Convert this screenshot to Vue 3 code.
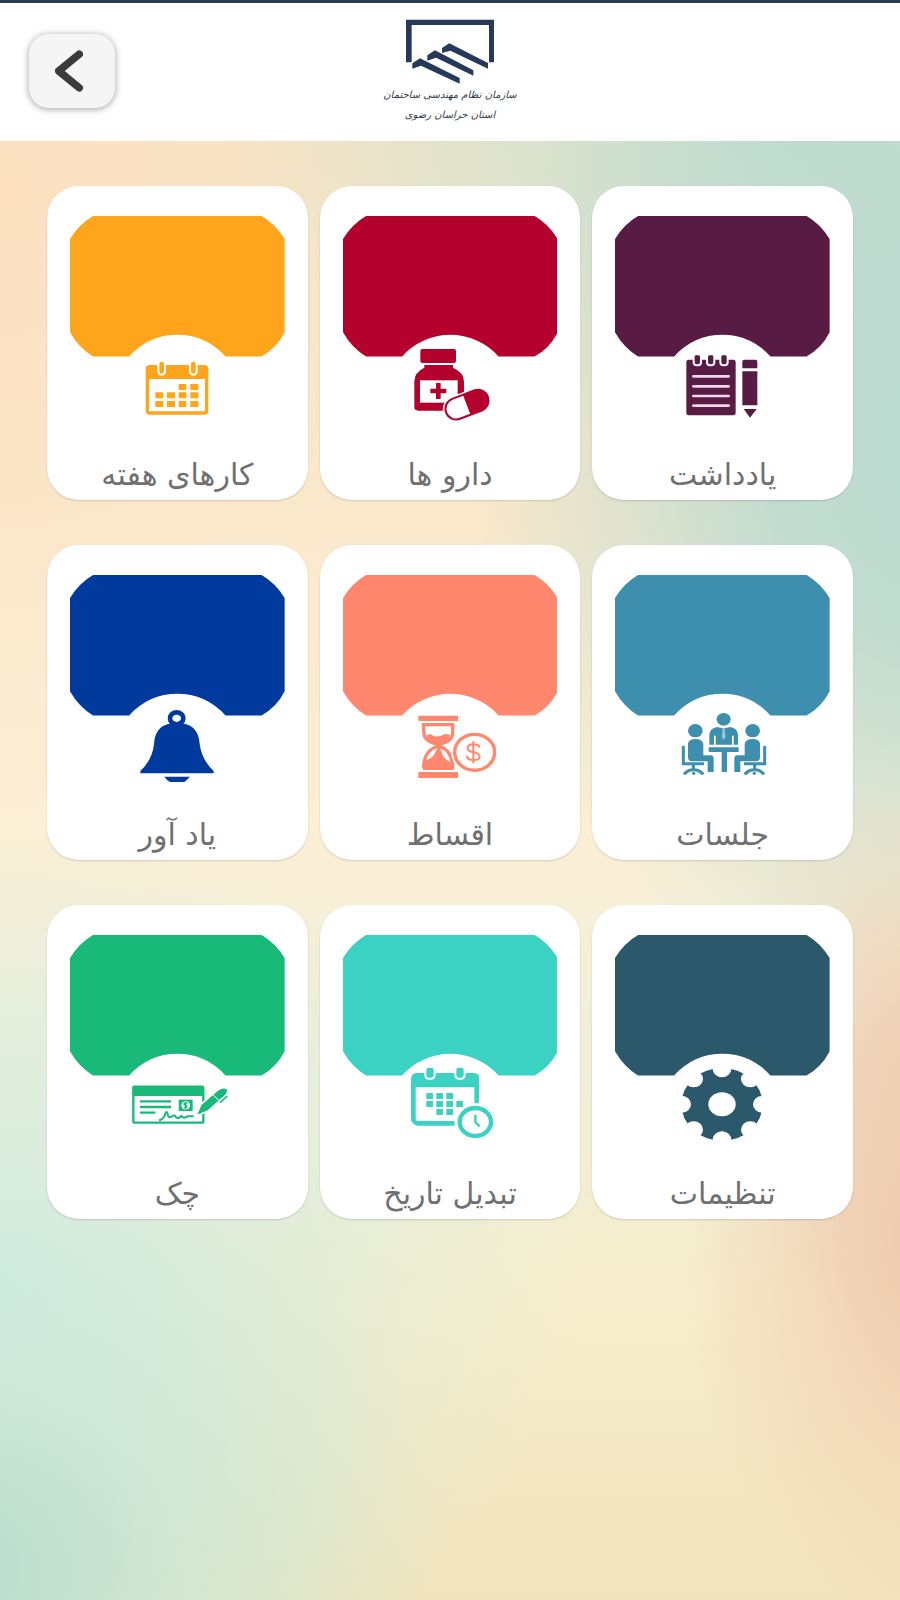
<script setup>
import { ref } from 'vue'

const selected = ref('')

const items = [
  { id: 'note', title: 'یادداشت', color: '#581b43' },
  { id: 'medicine', title: 'دارو ها', color: '#b3002d' },
  { id: 'week', title: 'کارهای هفته', color: '#ffa51c' },
  { id: 'meeting', title: 'جلسات', color: '#3e8fae' },
  { id: 'installment', title: 'اقساط', color: '#ff876d' },
  { id: 'reminder', title: 'یاد آور', color: '#003a9d' },
  { id: 'settings', title: 'تنظیمات', color: '#2c586b' },
  { id: 'convert', title: 'تبدیل تاریخ', color: '#3bd1c3' },
  { id: 'cheque', title: 'چک', color: '#18b979' },
]

const select = (item) => {
  selected.value = item.id
}

const goBack = () => {
  window.history.back()
}
</script>

<template>
  <div class="page">
    <svg class="sprite" aria-hidden="true">
      <symbol id="note" viewBox="9 15 360 270">
        <rect x="79" y="59" width="148" height="167" rx="7" fill="currentColor" />
        <g fill="currentColor" stroke="#fff" stroke-width="6">
          <rect x="101" y="41" width="22" height="35" rx="9" />
          <rect x="141" y="41" width="22" height="35" rx="9" />
          <rect x="181" y="41" width="22" height="35" rx="9" />
        </g>
        <path d="M95 36H210V46H95Z" fill="#fff" />
        <path d="M100 109H206M100 139H206M100 168H206M100 197H206" stroke="#f3d9ee" stroke-width="8" stroke-linecap="round" />
        <path d="M247 65Q247 59 253 59H286Q292 59 292 65V85H247ZM247 94H292V196H247ZM251 207H290L270 233Z" fill="currentColor" />
      </symbol>
      <symbol id="medicine" viewBox="0 15 360 270">
        <rect x="91" y="27" width="107" height="42" rx="6" fill="currentColor" />
        <path d="M103 75H189V83Q222 97 222 125V202Q222 212 211 212H85Q73 212 73 202V125Q73 97 103 83Z" fill="currentColor" />
        <rect x="90" y="121" width="113" height="67" fill="#fff" />
        <path d="M145 129V177M121 153H169" stroke="currentColor" stroke-width="14" />
        <g transform="rotate(-21 231 194)">
          <rect x="156" y="155" width="150" height="78" rx="39" fill="#fff" />
          <rect x="164" y="162" width="134" height="64" rx="32" fill="#fff" stroke="currentColor" stroke-width="6" />
          <path d="M230 161H266A33 33 0 0 1 266 227H230Z" fill="currentColor" />
        </g>
      </symbol>
      <symbol id="week" viewBox="-9 -15 360 270">
        <rect x="82" y="50" width="178" height="139" rx="7" fill="#fff" stroke="currentColor" stroke-width="10" />
        <path d="M80 48H262V87H80Z" fill="currentColor" />
        <rect x="115" y="32" width="20" height="42" rx="10" fill="currentColor" stroke="#fff" stroke-width="6" />
        <rect x="210" y="32" width="20" height="42" rx="10" fill="currentColor" stroke="#fff" stroke-width="6" />
        <path d="M176 111H199M211 111H235M106 136H130M141 136H165M176 136H199M211 136H235M106 162H130M141 162H165M176 162H199M211 162H235" stroke="currentColor" stroke-width="18" />
      </symbol>
      <symbol id="meeting" viewBox="9 42 360 270">
        <g fill="currentColor">
          <ellipse cx="191" cy="85" rx="21" ry="19" />
          <path d="M148 161V131Q150 112 171 108Q191 114 211 108Q232 112 234 131V161H221V134H216V161H167V134H162V161Z" />
          <path d="M186 112H196L194 120L197 138L191 146L185 138L188 120Z" fill="#fff" opacity="0.5" />
          <path d="M146 169H236V183H201V243H185V183H146Z" />
        </g>
        <g id="seat" fill="currentColor">
          <ellipse cx="106" cy="119" rx="22" ry="20" />
          <path d="M84 158Q86 144 106 144Q126 144 130 158V193H152Q161 193 161 204V243H143V211H96Q84 211 84 198Z" />
          <path d="M70 165V218H132M100 218V239M75 247Q86 235 100 236Q115 235 127 247" fill="none" stroke="currentColor" stroke-width="9" />
          <circle cx="75" cy="247" r="5" />
          <circle cx="101" cy="247" r="5" />
          <circle cx="127" cy="247" r="5" />
        </g>
        <use href="#seat" transform="matrix(-1 0 0 1 384 0)" />
      </symbol>
      <symbol id="installment" viewBox="0 42 360 270">
        <path d="M85 74H204V90H85ZM85 243H204V261H85Z" fill="currentColor" />
        <path d="M100 101H188V127Q188 151 146 161Q102 151 102 127ZM146 165Q101 177 101 231M146 165Q188 177 188 231" fill="none" stroke="currentColor" stroke-width="10" />
        <path d="M110 132Q121 127 130 134Q143 140 158 132Q168 126 180 132Q178 147 151 157V177Q185 194 192 237H98Q103 194 141 177V157Q114 149 110 132Z" fill="currentColor" />
        <path d="M109 208Q114 183 138 176Q137 196 109 208ZM154 178Q176 188 181 213Q156 202 154 178Z" fill="#fff" />
        <ellipse cx="254" cy="184" rx="70" ry="63" fill="#fff" />
        <ellipse cx="254" cy="184" rx="60" ry="54" fill="none" stroke="currentColor" stroke-width="10" />
        <path d="M269 170Q267 160 250 160Q233 160 233 171Q233 181 250 184Q269 187 269 197Q269 207 250 207Q231 207 230 194M250 151V217" fill="none" stroke="currentColor" stroke-width="6" />
      </symbol>
      <symbol id="reminder" viewBox="-9 42 360 270">
        <ellipse cx="170" cy="82" rx="20" ry="18" fill="none" stroke="currentColor" stroke-width="14" />
        <path d="M170 96C127 96 105 116 102 158C99 191 85 217 61 240V247H281V240C257 217 243 191 239 158C236 116 214 96 170 96Z" fill="currentColor" />
        <path d="M133 257H210Q203 265 193 273H150Q140 268 133 257Z" fill="currentColor" />
      </symbol>
      <symbol id="settings" viewBox="9 42 360 270">
        <ellipse cx="186" cy="163" rx="122" ry="109" fill="currentColor" />
        <g fill="#fff">
          <ellipse cx="186" cy="163" rx="41" ry="36" />
          <ellipse cx="186" cy="56" rx="28" ry="26" />
          <ellipse cx="186" cy="270" rx="28" ry="26" />
          <ellipse cx="66" cy="163" rx="27" ry="25" />
          <ellipse cx="306" cy="163" rx="27" ry="25" />
          <ellipse cx="101" cy="87" rx="28" ry="25" />
          <ellipse cx="271" cy="87" rx="28" ry="25" />
          <ellipse cx="101" cy="239" rx="28" ry="25" />
          <ellipse cx="271" cy="239" rx="28" ry="25" />
        </g>
      </symbol>
      <symbol id="convert" viewBox="0 42 360 270">
        <rect x="70" y="76" width="190" height="144" rx="14" fill="#fff" stroke="currentColor" stroke-width="14" />
        <path d="M65 82Q65 70 80 70H252Q267 70 267 82V112H65Z" fill="currentColor" />
        <rect x="106" y="50" width="28" height="36" rx="10" fill="currentColor" stroke="#fff" stroke-width="6" />
        <rect x="196" y="50" width="28" height="36" rx="10" fill="currentColor" stroke="#fff" stroke-width="6" />
        <ellipse cx="256" cy="216" rx="63" ry="57" fill="#fff" />
        <path d="M109 138H129M139 138H159M169 138H189M109 162H129M139 162H159M169 162H189M199 162H219M139 186H159M169 186H189" stroke="currentColor" stroke-width="18" />
        <ellipse cx="256" cy="216" rx="47" ry="42" fill="none" stroke="currentColor" stroke-width="13" />
        <path d="M256 195V216L269 229" fill="none" stroke="currentColor" stroke-width="7" />
      </symbol>
      <symbol id="cheque" viewBox="-9 12 360 270">
        <rect x="40" y="80" width="210" height="108" rx="3" fill="#fff" stroke="currentColor" stroke-width="7" />
        <path d="M38 79H252V108H38Z" fill="currentColor" />
        <path d="M60 124H153M60 141H153M60 158H106" stroke="currentColor" stroke-width="7" />
        <path d="M117 181Q131 178 136 161Q140 150 143 162Q145 177 156 169Q165 163 168 172Q175 178 184 168Q191 177 203 169L221 169" fill="none" stroke="currentColor" stroke-width="6" />
        <rect x="176" y="119" width="42" height="34" fill="currentColor" />
        <ellipse cx="197" cy="136" rx="13" ry="12" fill="#fff" />
        <path d="M203 130Q192 126 192 132Q193 136 199 137Q205 143 192 143M197 126V147" fill="none" stroke="currentColor" stroke-width="4" />
        <path d="M228 168L242 134L294 89Q312 78 323 88Q326 96 316 107L264 153Z" fill="currentColor" stroke="#fff" stroke-width="5" />
        <path d="M278 104L298 122" stroke="#fff" stroke-width="3" />
        <path d="M322 108L300 128" stroke="currentColor" stroke-width="5" />
      </symbol>
    </svg>

    <header class="header">
      <button class="back-btn" type="button" aria-label="بازگشت" @click="goBack">
        <svg viewBox="0 0 30 44" aria-hidden="true">
          <path d="M26 4L4 22L26 40" />
        </svg>
      </button>
      <div class="logo">
        <svg viewBox="102 58 270 198" aria-hidden="true">
          <path d="M105 60H369V188H354V76H122V188H105Z" />
          <path d="M124 207V191L147 176L266 235V252L150 198ZM169 183V167L192 152L307 212V228L195 174ZM213 160V145L235 131L351 190V207L238 153Z" />
        </svg>
        <p>سازمان نظام مهندسی ساختمان</p>
        <p>استان خراسان رضوی</p>
      </div>
    </header>

    <main class="menu" dir="rtl">
      <button
        v-for="item in items"
        :key="item.id"
        class="card"
        :class="{ selected: selected === item.id }"
        type="button"
        @click="select(item)"
      >
        <svg class="panel" viewBox="0 0 214 141" :style="{ color: item.color }" aria-hidden="true">
          <path d="M23 0H191Q205 8 214 23V116Q206 132 191 140H155A64 64 0 0 0 59 140H23Q9 132 0 116V23Q9 8 23 0Z" fill="currentColor" />
        </svg>
        <svg class="icon" :style="{ color: item.color }" aria-hidden="true">
          <use :href="'#' + item.id" />
        </svg>
        <span class="title">{{ item.title }}</span>
      </button>
    </main>
  </div>
</template>

<style>
body {
  margin: 0;
}
</style>

<style scoped>
.page {
  min-height: 100vh;
  box-sizing: border-box;
  border-top: 3px solid #2b3d4d;
  font-family: 'DejaVu Sans', 'Noto Sans', sans-serif;
  background:
    radial-gradient(ellipse 28% 24% at 104% 78%, #efc8ab 0%, rgba(240, 201, 172, 0) 100%),
    radial-gradient(ellipse 22% 18% at 102% 66%, rgba(240, 212, 184, 0.9) 0%, rgba(240, 212, 184, 0) 100%),
    radial-gradient(ellipse 52% 36% at 104% 28%, #b9dad1 0%, rgba(185, 218, 209, 0.85) 35%, rgba(185, 218, 209, 0) 100%),
    radial-gradient(ellipse 64% 20% at 90% 8%, #c3ddd0 0%, rgba(195, 221, 208, 0) 100%),
    radial-gradient(ellipse 54% 26% at -4% 98%, #b8ddcf 0%, rgba(196, 229, 216, 0.6) 45%, rgba(212, 236, 225, 0) 100%),
    radial-gradient(ellipse 64% 28% at 0% 80%, #d3ede2 0%, rgba(213, 237, 226, 0) 100%),
    radial-gradient(ellipse 50% 30% at 0% 12%, #fde1c1 0%, rgba(253, 225, 193, 0) 100%),
    linear-gradient(180deg, #f2e6c8 0%, #fae8cb 30%, #fbefd5 52%, #f0efda 66%, #f6edcb 82%, #f2e5bd 100%);
}

.sprite {
  display: block;
  width: 0;
  height: 0;
}

.header {
  display: grid;
  grid-template-columns: 1fr auto 1fr;
  align-items: start;
  box-sizing: border-box;
  min-height: 138px;
  padding: 16px 29px 9px;
  background-color: #fff;
}

.back-btn {
  display: flex;
  align-items: center;
  justify-content: center;
  width: 86px;
  height: 74px;
  margin-top: 15px;
  padding: 0 6px 0 0;
  border: none;
  border-radius: 20px;
  background-color: #f5f5f5;
  box-shadow: 0 1px 6px 1px rgba(0, 0, 0, 0.3);
  cursor: pointer;
}

.back-btn svg {
  width: 28px;
  height: 44px;
}

.back-btn path {
  fill: none;
  stroke: #3b3b3b;
  stroke-width: 8;
  stroke-linecap: round;
  stroke-linejoin: round;
}

.logo {
  display: flex;
  flex-direction: column;
  align-items: center;
}

.logo svg {
  width: 90px;
  height: 66px;
  fill: #26395a;
}

.logo p {
  margin: 0;
  color: #333b46;
  font-size: 10px;
  font-style: italic;
  line-height: 20px;
  direction: rtl;
}

.menu {
  display: grid;
  grid-template-columns: repeat(3, 1fr);
  gap: 45px 12px;
  padding: 45px 47px;
}

.card {
  display: flex;
  flex-direction: column;
  align-items: center;
  min-width: 0;
  padding: 30px 23px 5px;
  border: none;
  border-radius: 32px;
  background-color: #fff;
  box-shadow: 0 1px 2px rgba(0, 0, 0, 0.15);
  font-family: inherit;
  cursor: pointer;
}

.card:active,
.card.selected {
  background-color: #fdfdfd;
}

.panel {
  display: block;
  width: 100%;
}

.icon {
  width: 120px;
  height: 90px;
  margin-top: -12px;
}

.title {
  margin-top: 20px;
  color: #707070;
  font-size: 30px;
  line-height: 40px;
  white-space: nowrap;
}
</style>
